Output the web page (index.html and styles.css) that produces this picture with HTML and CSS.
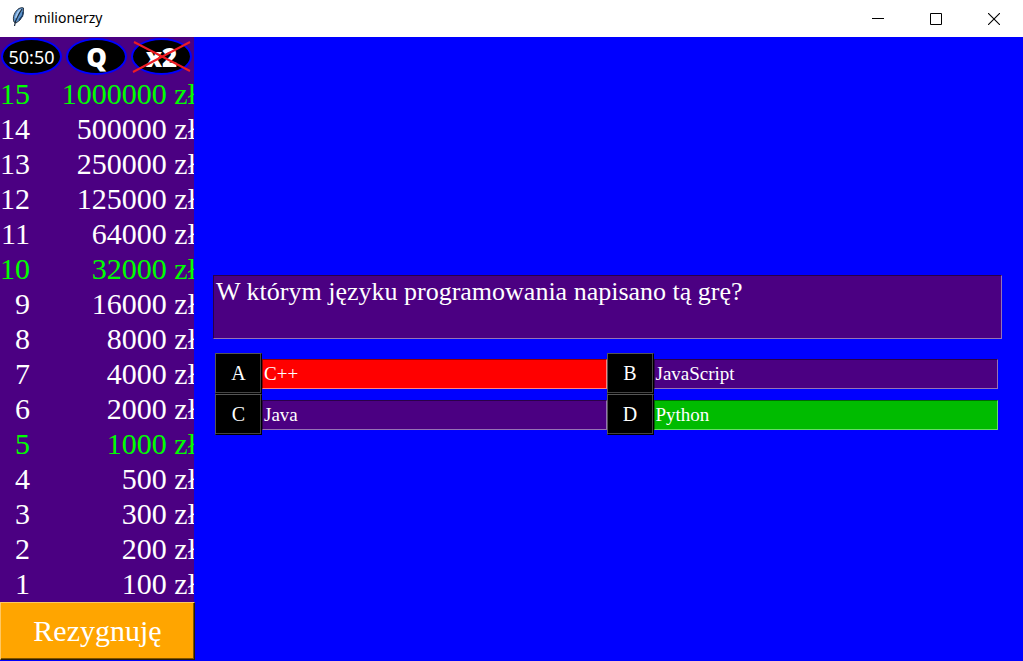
FILE: index.html
```html
<!DOCTYPE html>
<html lang="pl">
<head>
<meta charset="utf-8">
<title>milionerzy</title>
<link rel="stylesheet" href="styles.css">
</head>
<body>
<header class="titlebar">
  <svg class="feather" width="16" height="20" viewBox="0 0 16 20" aria-hidden="true">
    <path d="M4 15C2 10 5 4 9 1.500Q12 0 13.500 1Q14.500 7 10 13L6 16Z" fill="#5a92cc" stroke="#2b3440" stroke-width="1"/>
    <path d="M6 11Q7 5 11 2.500" fill="none" stroke="#a4c8ee" stroke-width="2"/>
    <path d="M4.500 19Q5 14 8 9Q10 5 12 2" fill="none" stroke="#1c2b3c" stroke-width="1.200"/>
    <path d="M13 5L12.500 9L9 13" fill="none" stroke="#1d3f66" stroke-width="1.500"/>
  </svg>
  <h1 class="title">milionerzy</h1>
  <div class="window-controls">
    <button class="window-button" aria-label="Minimalizuj"><svg width="12" height="12" viewBox="0 0 12 12"><path d="M0 5.5H12" stroke="#000"/></svg></button>
    <button class="window-button" aria-label="Maksymalizuj"><svg width="12" height="12" viewBox="0 0 12 12"><path d="M.5 .5H11.5V11.5H.5Z" fill="none" stroke="#000"/></svg></button>
    <button class="window-button" aria-label="Zamknij"><svg width="12" height="12" viewBox="0 0 12 12"><path d="M0 0L12 12M12 0L0 12" stroke="#000" stroke-width="1.1"/></svg></button>
  </div>
</header>
<div class="game">
  <aside class="sidebar">
    <div class="ladder">
      <div class="lifelines">
        <button class="lifeline">50:50</button>
        <button class="lifeline lifeline-bold">Q</button>
        <button class="lifeline lifeline-bold lifeline-used">x2<svg class="cross" viewBox="0 0 61 37" aria-hidden="true"><path d="M3 4L59 33M59 4L2 34" stroke="#ed1c24" stroke-width="2"/></svg></button>
      </div>
      <table class="prizes">
        <tbody>
          <tr class="safe"><td>15</td><td>1000000 zł</td></tr>
          <tr><td>14</td><td>500000 zł</td></tr>
          <tr><td>13</td><td>250000 zł</td></tr>
          <tr><td>12</td><td>125000 zł</td></tr>
          <tr><td>11</td><td>64000 zł</td></tr>
          <tr class="safe"><td>10</td><td>32000 zł</td></tr>
          <tr><td>9</td><td>16000 zł</td></tr>
          <tr><td>8</td><td>8000 zł</td></tr>
          <tr><td>7</td><td>4000 zł</td></tr>
          <tr><td>6</td><td>2000 zł</td></tr>
          <tr class="safe"><td>5</td><td>1000 zł</td></tr>
          <tr><td>4</td><td>500 zł</td></tr>
          <tr><td>3</td><td>300 zł</td></tr>
          <tr><td>2</td><td>200 zł</td></tr>
          <tr><td>1</td><td>100 zł</td></tr>
        </tbody>
      </table>
    </div>
    <button class="resign">Rezygnuję</button>
  </aside>
  <main class="board">
    <p class="question">W którym języku programowania napisano tą grę?</p>
    <div class="answers">
      <div class="answer"><button class="letter" aria-describedby="answer-a">A</button><div class="answer-text wrong" id="answer-a">C++</div></div>
      <div class="answer"><button class="letter" aria-describedby="answer-b">B</button><div class="answer-text" id="answer-b">JavaScript</div></div>
      <div class="answer"><button class="letter" aria-describedby="answer-c">C</button><div class="answer-text" id="answer-c">Java</div></div>
      <div class="answer"><button class="letter" aria-describedby="answer-d">D</button><div class="answer-text correct" id="answer-d">Python</div></div>
    </div>
  </main>
</div>
</body>
</html>
```
FILE: styles.css
```css
* {
  box-sizing: border-box;
}

body {
  display: flex;
  flex-direction: column;
  min-height: 100vh;
  margin: 0;
  background: #0000ff;
  color: #fff;
  font-family: "Liberation Serif", "Times New Roman", serif;
}

button {
  margin: 0;
  padding: 0;
  color: inherit;
  font: inherit;
}

.titlebar {
  display: flex;
  align-items: center;
  height: 37px;
  padding-left: 10px;
  background: #fff;
  color: #000;
}

.feather {
  margin-bottom: 4px;
}

.title {
  flex: 1;
  margin: 0 0 2px 8px;
  font: 14px "Noto Sans", "Open Sans", sans-serif;
}

.window-controls {
  display: flex;
}

.window-button {
  display: flex;
  align-items: center;
  justify-content: center;
  width: 58px;
  height: 36px;
  border: 0;
  background: none;
}

.game {
  display: flex;
  flex: 1;
}

.sidebar {
  width: 195px;
}

.ladder {
  width: 194px;
  padding-bottom: 1px;
  overflow: hidden;
  background: #4b0082;
}

.lifelines {
  display: flex;
  gap: 4px;
  height: 39px;
  padding: 1px;
}

.lifeline {
  position: relative;
  flex: none;
  width: 61px;
  height: 37px;
  border: 2px solid #0000ff;
  border-radius: 50%;
  background: #000;
  font: 18px "Noto Sans", "Open Sans", sans-serif;
}

.lifeline-bold {
  font-family: "Open Sans", "Noto Sans", sans-serif;
  font-size: 26px;
  font-weight: 800;
  line-height: 32px;
}

.cross {
  position: absolute;
  inset: -2px;
}

.prizes {
  width: 196px;
  border-spacing: 0;
  font-size: 30px;
  line-height: 35px;
  white-space: nowrap;
}

.prizes td {
  padding: 0;
  text-align: right;
}

.prizes td:first-child {
  width: 29px;
}

.safe {
  color: #00ff00;
}

.resign {
  display: block;
  width: 100%;
  height: 58px;
  border: 1px solid;
  border-color: #ffc863 #2b1c00 #2b1c00 #ffc863;
  background: #ffa500;
  box-shadow: inset -1px -1px #805300;
  font-size: 30px;
}

.board {
  flex: 1;
  display: flex;
  flex-direction: column;
  justify-content: center;
  gap: 14px;
  padding: 12px 21px 0 18px;
}

.question {
  min-height: 64px;
  margin: 0;
  padding: 1px 2px;
  border: 1px solid;
  border-color: #2a0049 #9571b5 #9571b5 #2a0049;
  background: #4b0082;
  font-size: 26px;
  line-height: 30px;
}

.answers {
  display: grid;
  grid-template-columns: 1fr 1fr;
  margin: 0 4px 0 2px;
}

.answer {
  display: flex;
  align-items: center;
}

.letter {
  width: 47px;
  height: 41px;
  border: 1px solid;
  border-color: #555 #000 #000 #555;
  background: #000;
  box-shadow: inset -1px -1px #444;
  font-size: 20px;
}

.answer-text {
  flex: 1;
  height: 30px;
  padding: 0 1px;
  border: 1px solid;
  border-color: #2a0049 #9571b5 #9571b5 #2a0049;
  background: #4b0082;
  font-size: 19px;
  line-height: 28px;
}

.wrong {
  border-color: #900000 #ff8080 #ff8080 #900000;
  background: #ff0000;
}

.correct {
  border-color: #006b00 #66dd66 #66dd66 #006b00;
  background: #00bb00;
}
```
